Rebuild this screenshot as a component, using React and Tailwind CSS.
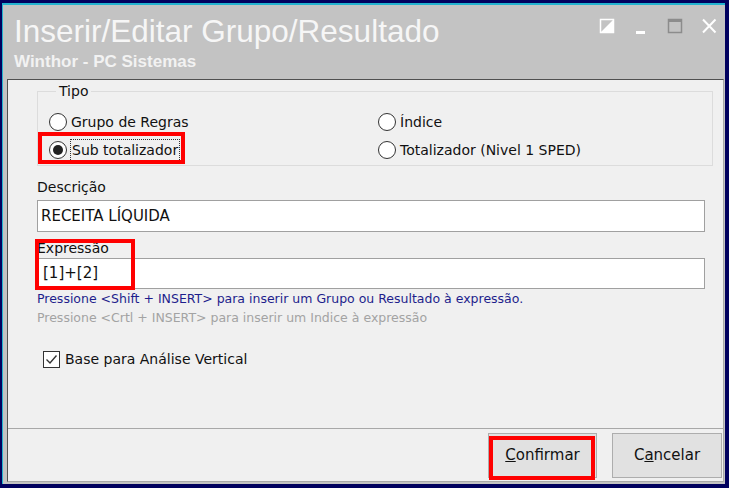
export default function App() {
  return (
    <div
      className="w-[729px] h-[488px] bg-[#00005e] pt-[3px] pl-[2px] pr-[4px] pb-[4px] flex"
      style={{ fontFamily: '"DejaVu Sans", sans-serif' }}
    >
      <div className="flex-1 flex flex-col border-t-2 border-l border-[#22b3cf] bg-[#c3c3c3]">
        <TitleArea />
        <div className="relative flex-1 flex flex-col ml-[4px] mr-[1px] mb-[2px] border border-t-[#505050] border-l-[#505050] border-r-[#a8a8a8] border-b-[#a8a8a8] bg-[#f0f0f0] text-[#111]">
          <div className="flex-1 flex flex-col">
            <fieldset className="mt-[3px] ml-[29px] mr-[10px] border border-[#dcdcdc] pl-[11px] pt-[8px] pb-[1px]">
              <legend className="ml-[7px] px-[3px] text-[14px] leading-[17px]">Tipo</legend>
              <div className="grid grid-cols-[329px_1fr]">
                <Radio label="Grupo de Regras" />
                <Radio label="Índice" />
                <Radio label="Sub totalizador" checked focus />
                <Radio label="Totalizador (Nivel 1 SPED)" />
              </div>
            </fieldset>

            <div className="ml-[29px] mt-[13px] text-[14px] leading-[17px]">Descrição</div>
            <div className="ml-[29px] mt-[4px] w-[668px] h-[32px] bg-white border border-[#a0a0a0] flex items-center pl-[3px] text-[15px]">
              RECEITA LÍQUIDA
            </div>

            <div className="ml-[29px] mt-[8px] text-[14px] leading-[17px]">Expressão</div>
            <div className="ml-[29px] mt-[1px] w-[668px] h-[31px] bg-white border border-[#a0a0a0] flex items-center pl-[5px] text-[15px]">
              [1]+[2]
            </div>

            <div className="ml-[29px] mt-[2px] text-[12.5px] leading-[15px] text-[#1e1e8c]">
              Pressione &lt;Shift + INSERT&gt; para inserir um Grupo ou Resultado à expressão.
            </div>
            <div className="ml-[29px] mt-[4px] text-[12.5px] leading-[15px] text-[#a3a3a3]">
              Pressione &lt;Crtl + INSERT&gt; para inserir um Indice à expressão
            </div>

            <div className="ml-[35px] mt-[24px] h-[20px] flex items-center gap-[5px] text-[14px]">
              <span className="w-[17px] h-[17px] border border-[#333] bg-white flex items-center justify-center">
                <svg width="13" height="13" viewBox="0 0 13 13">
                  <path d="M1.5 6.5 L5 10 L11.5 2.5" fill="none" stroke="#333" strokeWidth="1.4" />
                </svg>
              </span>
              <span>Base para Análise Vertical</span>
            </div>
          </div>

          <div className="h-[53px] border-t border-[#a8a8a8] flex justify-end gap-[15px] pt-[4px] pr-[1px]">
            <button className="w-[109px] h-[45px] bg-[#e1e1e1] border border-[#adadad] text-[15px] text-[#111]">
              <span className="underline">C</span>onfirmar
            </button>
            <button className="w-[110px] h-[45px] bg-[#e1e1e1] border border-[#adadad] text-[15px] text-[#111]">
              C<span className="underline">a</span>ncelar
            </button>
          </div>

          {/* marcações vermelhas */}
          <div className="absolute left-[30px] top-[52px] w-[147px] h-[32px] border-4 border-[#ff0000]" />
          <div className="absolute left-[27px] top-[159px] w-[100px] h-[51px] border-4 border-[#ff0000]" />
          <div className="absolute left-[481px] top-[356px] w-[106px] h-[44px] border-4 border-[#ff0000]" />
        </div>
      </div>
    </div>
  );
}

function TitleArea() {
  return (
    <div className="h-[74px] pl-[11px] pr-[8px] pt-[8px] text-white" style={{ fontFamily: '"Liberation Sans", Arial, sans-serif' }}>
      <div className="flex">
        <div className="text-[31.5px] leading-[36px] text-[#f6f6f6]">Inserir/Editar Grupo/Resultado</div>
        <div className="ml-auto mt-[5px] flex gap-[18px]">
          <svg width="16" height="16" viewBox="0 0 16 16">
            <rect x="1.5" y="1.5" width="13" height="13" fill="none" stroke="white" strokeWidth="1.5" />
            <path d="M14.5 1.5 L14.5 14.5 L1.5 14.5 Z" fill="white" />
          </svg>
          <svg width="16" height="16" viewBox="0 0 16 16">
            <rect x="3" y="13" width="9" height="3" fill="white" />
          </svg>
          <svg width="16" height="16" viewBox="0 0 16 16">
            <rect x="1.5" y="1.5" width="13" height="13" fill="none" stroke="#8c8c8c" strokeWidth="1.5" />
            <rect x="1" y="1" width="14" height="3" fill="#8c8c8c" />
          </svg>
          <svg width="16" height="16" viewBox="0 0 16 16">
            <path d="M2 1.5 L14.5 14.5 M14.5 1.5 L2 14.5" stroke="white" strokeWidth="2" />
          </svg>
        </div>
      </div>
      <div className="mt-[3px] text-[17px] leading-[19px] font-bold text-[#f2f2f2]">Winthor - PC Sistemas</div>
    </div>
  );
}

function Radio({ label, checked, focus }) {
  return (
    <div className="h-[28px] flex items-center gap-[4px] text-[14px]">
      <span className="w-[18px] h-[18px] rounded-full border border-[#333] bg-white flex items-center justify-center">
        {checked && <span className="w-[10px] h-[10px] rounded-full bg-[#222]" />}
      </span>
      <span className={focus ? "outline outline-1 outline-dotted outline-[#333] px-[1px]" : ""}>{label}</span>
    </div>
  );
}
